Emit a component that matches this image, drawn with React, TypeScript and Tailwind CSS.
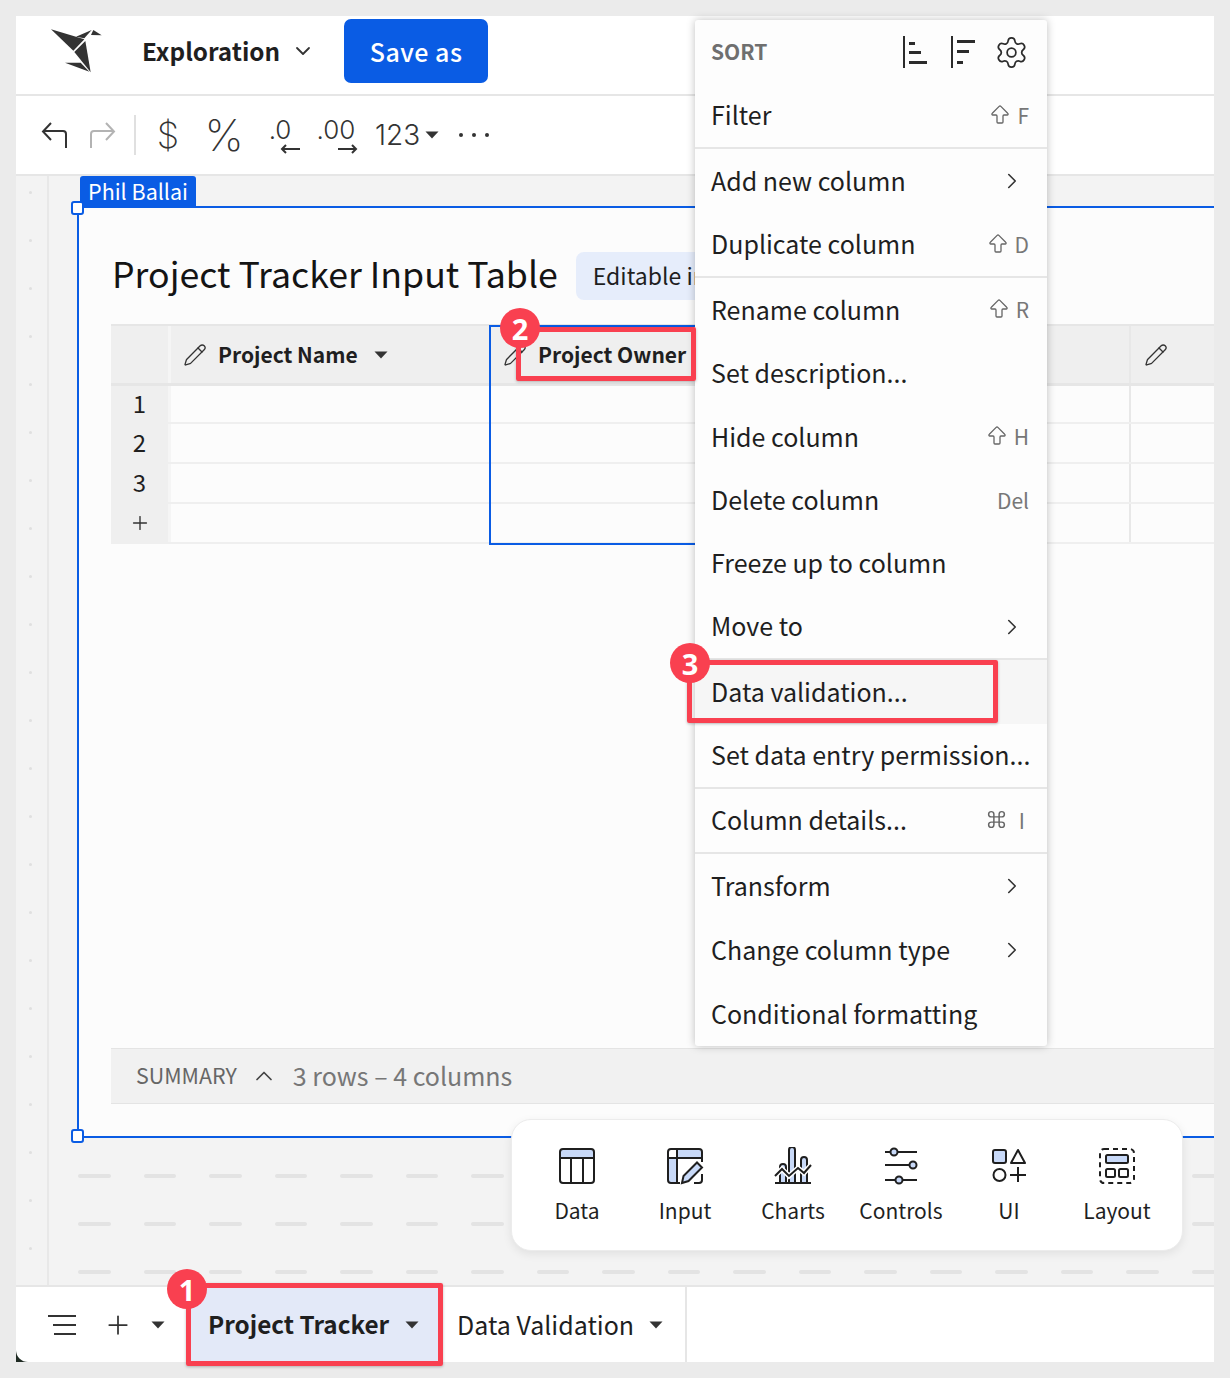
import React from "react";
import { ArrowBigUp, ChevronDown, ChevronRight, ChevronUp, Command, Pencil, Plus, Settings } from "lucide-react";

const Caret = ({ className = "" }: { className?: string }) => (
  <svg width="14" height="8" viewBox="0 0 14 8" className={className}>
    <path d="M0.5 0.5h13L7 7.5z" fill="#333" />
  </svg>
);

const Logo = () => (
  <svg width="80" height="65" viewBox="0 0 240 195" className="ml-[24px] shrink-0 mt-[3px]">
    <path d="M33 28L133 58L100 92z" fill="#333" />
    <path d="M108 50L155 30L133 55z" fill="#333" />
    <path d="M160 30L185 46L153 45z" fill="#333" />
    <path d="M103 96L136 63L152 157z" fill="#333" />
    <path d="M75 128L122 128L148 155z" fill="#333" />
  </svg>
);

const Divider = () => <div className="h-[2px] bg-[#e6e6e6]" />;

type RowProps = { label: string; keyName?: string; shift?: boolean; cmd?: boolean; more?: boolean; tall?: boolean; hover?: boolean };

const MenuRow = ({ label, keyName, shift, cmd, more, tall, hover }: RowProps) => (
  <div className={`flex items-center justify-between pl-[16px] pr-[18px] ${tall ? "h-[64px]" : "h-[63px]"} ${hover ? "bg-[#f6f6f6]" : ""}`}>
    <span className="pb-[3px] text-[25px] leading-[32px] whitespace-nowrap text-[#1f1f1f]">{label}</span>
    {more && <ChevronRight size={26} strokeWidth={1.5} className="mr-[4px] text-[#333]" />}
    {keyName && (
      <span className={`flex items-center gap-[5px] pb-[2px] text-[21px] leading-[28px] text-[#777] ${cmd ? "mr-[4px]" : ""}`}>
        {shift && <ArrowBigUp size={24} strokeWidth={1.3} className="text-[#666]" />}
        {cmd && <Command size={21} strokeWidth={1.7} className="mr-[7px] text-[#666]" />}
        {keyName}
      </span>
    )}
  </div>
);

const ColumnMenu = () => (
  <div className="absolute left-[695px] top-[20px] z-20 w-[352px] rounded-[3px] bg-[#fdfdfd] shadow-[0_0_8px_rgba(0,0,0,0.25)]">
    <div className="flex h-[64px] items-center justify-between pl-[16px] pr-[18px]">
      <span className="pb-[2px] text-[21px] font-semibold leading-[28px] text-[#6f6f6f]">SORT</span>
      <div className="flex items-center">
        <svg width="26" height="32" viewBox="0 0 26 32" className="mr-[22px]">
          <path d="M1 0v32" stroke="#2b2b2b" strokeWidth="2" />
          <path d="M6 6h6v3H6zM6 15h12v3H6zM6 25h18v3H6z" fill="#2b2b2b" />
        </svg>
        <svg width="26" height="32" viewBox="0 0 26 32" className="mr-[17px]">
          <path d="M1 0v32" stroke="#2b2b2b" strokeWidth="2" />
          <path d="M6 4h18v3H6zM6 14h12v3H6zM6 25h6v3H6z" fill="#2b2b2b" />
        </svg>
        <Settings size={35} strokeWidth={1.2} className="text-[#2b2b2b]" />
      </div>
    </div>
    <MenuRow label="Filter" keyName="F" shift />
    <Divider />
    <MenuRow label="Add new column" more tall />
    <MenuRow label="Duplicate column" keyName="D" shift />
    <Divider />
    <MenuRow label="Rename column" keyName="R" shift tall />
    <MenuRow label="Set description..." />
    <MenuRow label="Hide column" keyName="H" shift tall />
    <MenuRow label="Delete column" keyName="Del" />
    <MenuRow label="Freeze up to column" />
    <MenuRow label="Move to" more />
    <Divider />
    <MenuRow label="Data validation..." tall hover />
    <MenuRow label="Set data entry permission..." />
    <Divider />
    <MenuRow label="Column details..." keyName="I" cmd />
    <Divider />
    <MenuRow label="Transform" more tall />
    <MenuRow label="Change column type" more tall />
    <MenuRow label="Conditional formatting" tall />
  </div>
);

const Callout = ({ n, box, badge }: { n: string; box: string; badge: string }) => (
  <>
    <div className={`absolute z-30 rounded-[2px] border-[5px] border-[#f94050] shadow-[0_1px_3px_rgba(0,0,0,0.25)] ${box}`} />
    <div className={`absolute z-30 flex h-[40px] w-[40px] items-center justify-center rounded-full bg-[#f94050] text-[29px] font-bold leading-none text-white [font-family:'Open_Sans',sans-serif] ${badge}`}>
      {n}
    </div>
  </>
);

const TableRows = [
  { label: "1", h: "h-[38px]" },
  { label: "2", h: "h-[40px]" },
  { label: "3", h: "h-[40px]" },
  { label: "+", h: "h-[40px]" },
];

const InputTable = () => (
  <div className="relative mt-[23px] ml-[32px] border-t-[2px] border-[#e6e6e6]">
    <div className="flex h-[60px] border-b-[3px] border-[#e6e6e6] bg-[#efefef]">
      <div className="w-[60px] shrink-0 border-r-[3px] border-[#f5f5f5]" />
      <div className="flex w-[319px] shrink-0 items-center pl-[12px]">
        <Pencil size={24} strokeWidth={1.3} className="text-[#333]" />
        <span className="ml-[11px] pb-[2px] text-[21px] font-semibold leading-[30px] text-[#1f1f1f]">Project Name</span>
        <Caret className="ml-[16px]" />
      </div>
      <div className="flex w-[639px] shrink-0 items-center pl-[13px]">
        <Pencil size={24} strokeWidth={1.3} className="text-[#333]" />
        <span className="ml-[11px] pb-[2px] text-[21px] font-semibold leading-[30px] text-[#1f1f1f]">Project Owner</span>
      </div>
      <div className="flex flex-1 items-center border-l-[2px] border-[#e8e8e8] pl-[13px]">
        <Pencil size={24} strokeWidth={1.3} className="text-[#333]" />
      </div>
    </div>
    {TableRows.map((row) => (
      <div key={row.label} className={`flex border-b-[2px] border-[#efefef] ${row.h}`}>
        <div className="flex w-[60px] shrink-0 items-center justify-center border-r-[3px] border-[#f5f5f5] bg-[#efefef] pb-[2px] text-[24px] leading-[30px] text-[#1f1f1f]">
          {row.label === "+" ? <Plus size={22} strokeWidth={1.5} className="mt-[2px] text-[#333]" /> : row.label}
        </div>
        <div className="w-[319px] shrink-0" />
        <div className="w-[639px] shrink-0" />
        <div className="flex-1 border-l-[2px] border-[#e8e8e8]" />
      </div>
    ))}
    {/* selected column */}
    <div className="absolute left-[378px] top-[-1px] h-[220px] w-[300px] border-y-[2px] border-l-[2px] border-[#0a5ce4]" />
  </div>
);

const DataIcon = () => (
  <svg width="38" height="38" viewBox="0 0 38 38" fill="none" stroke="#1f1f1f" strokeWidth="2">
    <path d="M2 11V5a3 3 0 0 1 3-3h28a3 3 0 0 1 3 3v6z" fill="#c8d9f8" stroke="none" />
    <rect x="2" y="2" width="34" height="34" rx="3" />
    <path d="M2 11h34M13 11v25M25 11v25" />
  </svg>
);

const InputIcon = () => (
  <svg width="38" height="38" viewBox="0 0 38 38" fill="none" stroke="#1f1f1f" strokeWidth="2">
    <path d="M3 10h7v26H5a2 2 0 0 1-2-2zM10 3h23a2 2 0 0 1 2 2v5H10z" fill="#c8d9f8" stroke="none" />
    <path d="M14 36H5a3 3 0 0 1-3-3V5a3 3 0 0 1 3-3h28a3 3 0 0 1 3 3v10M2 11h34M11 2v34M36 27v6a3 3 0 0 1-3 3h-5" />
    <path d="M16 36l1.500-7L31 15.500l5 5L22.500 34z" fill="#c8d9f8" />
  </svg>
);

const ChartsIcon = () => (
  <svg width="38" height="38" viewBox="0 0 38 38" fill="none" stroke="#1f1f1f" strokeWidth="2">
    <path d="M7 36V20a2.500 2.500 0 0 1 6 0v16M16 36V3a3 3 0 0 1 6 0v33M28 36V13a3 3 0 0 1 6 0v23" fill="#c8d9f8" transform="translate(-1 0)" />
    <path d="M1 29l7-7 7 7 9-8 6 5 7-8" stroke="#fff" strokeWidth="5" />
    <path d="M1 29l7-7 7 7 9-8 6 5 7-8" />
    <path d="M1 36h36" />
  </svg>
);

const ControlsIcon = () => (
  <svg width="38" height="38" viewBox="0 0 38 38" fill="none" stroke="#1f1f1f" strokeWidth="2">
    <path d="M3 5h5M16 5h19M3 18h24M3 33h10M21 33h14" />
    <circle cx="12" cy="5" r="3.500" fill="#c8d9f8" />
    <circle cx="31" cy="18" r="3.500" fill="#c8d9f8" />
    <circle cx="17" cy="33" r="3.500" fill="#c8d9f8" />
  </svg>
);

const UiIcon = () => (
  <svg width="38" height="38" viewBox="0 0 38 38" fill="none" stroke="#1f1f1f" strokeWidth="2">
    <rect x="3" y="3" width="13" height="13" rx="2" fill="#c8d9f8" />
    <path d="M28 3l7 13H21z" strokeLinejoin="round" />
    <circle cx="9.500" cy="28" r="6" />
    <path d="M28 20v15M20 28h16" />
  </svg>
);

const LayoutIcon = () => (
  <svg width="38" height="38" viewBox="0 0 38 38" fill="none" stroke="#1f1f1f" strokeWidth="2">
    <rect x="2" y="2" width="34" height="34" rx="4" strokeDasharray="5 4" />
    <rect x="8" y="8" width="22" height="8" rx="1.500" fill="#c8d9f8" />
    <rect x="8" y="22" width="9" height="8" rx="1.500" />
    <rect x="21" y="22" width="9" height="8" rx="1.500" />
  </svg>
);

const PaletteItems = [
  { label: "Data", icon: <DataIcon /> },
  { label: "Input", icon: <InputIcon /> },
  { label: "Charts", icon: <ChartsIcon /> },
  { label: "Controls", icon: <ControlsIcon /> },
  { label: "UI", icon: <UiIcon /> },
  { label: "Layout", icon: <LayoutIcon /> },
];

const Palette = () => (
  <div className="absolute left-[511px] top-[1119px] z-10 flex h-[132px] w-[672px] rounded-[20px] border border-[#ececec] bg-white px-[11px] pt-[27px] shadow-[0_3px_10px_rgba(0,0,0,0.08)]">
    {PaletteItems.map((item) => (
      <div key={item.label} className="flex w-[108px] flex-col items-center">
        {item.icon}
        <span className="mt-[11px] text-[21px] leading-[28px] text-[#1f1f1f]">{item.label}</span>
      </div>
    ))}
  </div>
);

const DashRow = () => (
  <div className="mt-[44px] flex h-[4px] gap-[33px]">
    {Array.from({ length: 19 }).map((_, i) => (
      <div key={i} className="h-[4px] w-[32.500px] shrink-0 rounded-full bg-[#e3e3e3]" />
    ))}
  </div>
);

const Canvas = () => (
  <div className="flex h-[1109px] overflow-hidden bg-[#f3f3f3]">
    <div className="flex w-[33px] shrink-0 flex-col gap-[45px] border-r-[2px] border-[#e8e8e8] pl-[13px] pt-[15px]">
      {Array.from({ length: 23 }).map((_, i) => (
        <div key={i} className="h-[3px] w-[3px] shrink-0 rounded-full bg-[#e0e0e0]" />
      ))}
    </div>
    <div className="min-w-0 flex-1">
      <div className="ml-[31px] flex h-[30px] w-[116px] items-center justify-center rounded-t-[3px] bg-[#0a5ce4] pb-[1px] text-[21.500px] leading-[28px] text-white">
        Phil Ballai
      </div>
      <div className="relative ml-[28px] flex h-[932px] flex-col border-y-[2px] border-l-[2px] border-[#0a5ce4] bg-[#fcfcfc]">
        <div className="absolute left-[-8px] top-[-7px] h-[14px] w-[13px] rounded-[3px] border-[2px] border-[#0a5ce4] bg-white" />
        <div className="absolute bottom-[-7px] left-[-8px] h-[14px] w-[13px] rounded-[3px] border-[2px] border-[#0a5ce4] bg-white" />
        <div className="ml-[33px] mt-[43px] flex items-center">
          <span className="pb-[6px] text-[35.700px] leading-[44px] whitespace-nowrap text-[#141414]">Project Tracker Input Table</span>
          <span className="ml-[18px] flex h-[48px] items-center rounded-[8px] bg-[#e6edfb] px-[17px] pb-[2px] text-[23px] leading-[30px] whitespace-nowrap text-[#1f1f1f]">
            Editable input
          </span>
        </div>
        <InputTable />
        <div className="mb-[32px] ml-[32px] mt-auto flex h-[56px] items-center border-y border-[#e4e4e4] bg-[#f1f1f1] pl-[25px]">
          <span className="pb-[2px] text-[21.400px] leading-[28px] text-[#666]">SUMMARY</span>
          <ChevronUp size={28} strokeWidth={1.5} className="ml-[13px] text-[#444]" />
          <span className="ml-[15px] pb-[3px] text-[25px] leading-[32px] text-[#777]">3 rows – 4 columns</span>
        </div>
      </div>
      <div className="ml-[29px] mt-[-8px]">
        <DashRow />
        <DashRow />
        <DashRow />
      </div>
    </div>
  </div>
);

const TabBar = () => (
  <div className="bg-[#1e2a22]">
    <div className="flex h-[77px] items-stretch rounded-bl-[12px] border-t-[2px] border-[#e6e6e6] bg-white">
      <div className="flex items-center">
        <svg width="28" height="22" viewBox="0 0 28 22" className="ml-[32px]" fill="none" stroke="#333" strokeWidth="2">
          <path d="M0 2h28M5 11h23M6 20h22" />
        </svg>
        <Plus size={30} strokeWidth={1.4} className="ml-[27px] text-[#333]" />
        <Caret className="ml-[18px]" />
      </div>
      <div className="ml-[24px] flex w-[250px] items-center bg-[#e3e9f8] pl-[19px]">
        <span className="pb-[2px] text-[24.300px] font-semibold leading-[32px] text-[#1f1f1f]">Project Tracker</span>
        <Caret className="ml-[16px]" />
      </div>
      <div className="flex w-[248px] items-center border-r-[2px] border-[#e6e6e6] pl-[18px]">
        <span className="pb-[2px] text-[25px] leading-[32px] text-[#1f1f1f]">Data Validation</span>
        <Caret className="ml-[15px]" />
      </div>
    </div>
  </div>
);

const App = () => {
  return (
    <div className="relative h-[1378px] w-[1230px] overflow-hidden bg-[#ebebeb] pl-[16px] pr-[16px] pt-[16px] [font-family:'Noto_Sans_CJK_JP',sans-serif]">
      <div className="overflow-hidden bg-white">
        <div className="flex h-[80px] items-center border-b-[2px] border-[#e6e6e6] pb-[8px]">
          <Logo />
          <span className="ml-[22px] text-[24.300px] font-semibold leading-[32px] text-[#1f1f1f]">Exploration</span>
          <ChevronDown size={24} strokeWidth={1.8} className="ml-[11px] text-[#333]" />
          <div className="ml-[29px] flex h-[64px] w-[144px] items-center justify-center rounded-[7px] bg-[#0a5ce4] text-[25px] font-medium leading-[32px] tracking-[0.5px] text-white">
            Save as
          </div>
        </div>

        <div className="flex h-[80px] items-center border-b-[2px] border-[#e6e6e6] text-[#333] [font-family:Inter,sans-serif]">
          <svg width="26" height="26" viewBox="0 0 26 26" className="ml-[25px]" fill="none" stroke="#333" strokeWidth="2">
            <path d="M25 26V12a3 3 0 0 0-3-3H2M10 1L2 9.500 10 18" />
          </svg>
          <svg width="26" height="26" viewBox="0 0 26 26" className="ml-[23px]" fill="none" stroke="#b3b3b3" strokeWidth="2">
            <path d="M1 26V12a3 3 0 0 1 3-3h20M16 1l8 8.500L16 18" />
          </svg>
          <div className="ml-[18px] h-[40px] w-[2px] bg-[#e0e0e0]" />
          <span className="ml-[20px] w-[24px] text-center text-[36px] font-extralight leading-[44px]">$</span>
          <span className="ml-[22px] w-[44px] text-center text-[44px] font-extralight leading-[44px]">%</span>
          <div className="ml-[15px] flex w-[38px] flex-col items-center">
            <span className="text-[26px] font-light leading-[28px]">.0</span>
            <svg width="20" height="10" viewBox="0 0 20 10" className="ml-[20px]" fill="none" stroke="#333" strokeWidth="2">
              <path d="M20 5H2M6 1L2 5l4 4" />
            </svg>
          </div>
          <div className="ml-[17px] flex w-[40px] flex-col items-center">
            <span className="text-[26px] font-light leading-[28px]">.00</span>
            <svg width="20" height="10" viewBox="0 0 20 10" className="ml-[24px]" fill="none" stroke="#333" strokeWidth="2">
              <path d="M0 5h18M14 1l4 4-4 4" />
            </svg>
          </div>
          <span className="ml-[19px] text-[28px] font-light leading-[36px]">123</span>
          <Caret className="ml-[5px]" />
          <div className="ml-[20px] flex gap-[9px]">
            <div className="h-[4px] w-[4px] rounded-full bg-[#333]" />
            <div className="h-[4px] w-[4px] rounded-full bg-[#333]" />
            <div className="h-[4px] w-[4px] rounded-full bg-[#333]" />
          </div>
        </div>

        <Canvas />
        <TabBar />
      </div>

      <ColumnMenu />
      <Palette />
      <Callout n="1" box="left-[186px] top-[1283px] h-[83px] w-[257px]" badge="left-[167px] top-[1269px]" />
      <Callout n="2" box="left-[516px] top-[327px] h-[54px] w-[180px]" badge="left-[500px] top-[308px]" />
      <Callout n="3" box="left-[687px] top-[660px] h-[63px] w-[311px]" badge="left-[670px] top-[643px]" />
    </div>
  );
};

export default App;
